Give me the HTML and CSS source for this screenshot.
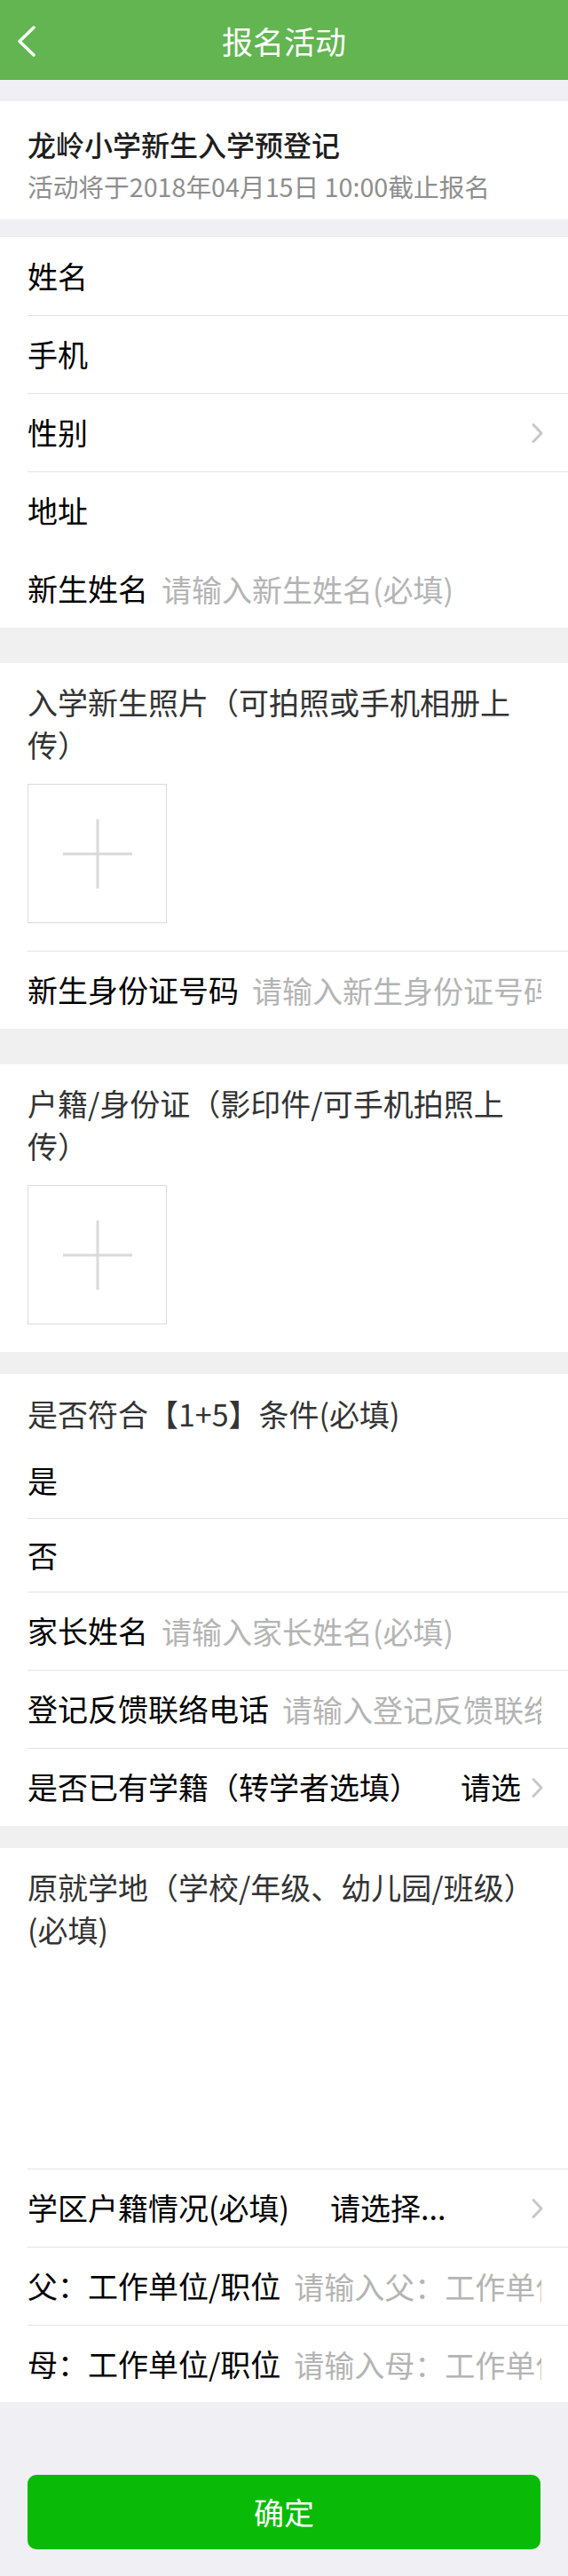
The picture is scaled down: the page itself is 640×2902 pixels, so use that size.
FILE: index.html
```html
<!DOCTYPE html>
<html lang="zh-CN">
<head>
<meta charset="utf-8">
<title>报名活动</title>
<link rel="stylesheet" href="styles.css">
</head>
<body>
<header class="navbar">
  <div class="nav-left">
    <svg class="back-icon" width="24" height="36" viewBox="0 0 24 36"><path d="M19 2 L3 17.5 L19 33" fill="none" stroke="#fff" stroke-width="3.5" stroke-linecap="round" stroke-linejoin="round"/></svg>
  </div>
  <h1 class="nav-title">报名活动</h1>
  <div class="nav-right"></div>
</header>

<section class="card intro">
  <div class="intro-title">龙岭小学新生入学预登记</div>
  <div class="intro-sub">活动将于2018年04月15日 10:00截止报名</div>
</section>

<section class="card basic">
  <div class="row"><span class="label">姓名</span></div>
  <div class="row line"><span class="label">手机</span></div>
  <div class="row line"><span class="label">性别</span>
    <svg class="chevron" width="15" height="24" viewBox="0 0 15 24"><path d="M3 2.5 L12 12 L3 21.5" fill="none" stroke="#c7c7cc" stroke-width="3" stroke-linecap="round" stroke-linejoin="round"/></svg>
  </div>
  <div class="row line"><span class="label">地址</span></div>
  <div class="row"><span class="label">新生姓名</span><input class="field" placeholder="请输入新生姓名(必填)"></div>
</section>

<div class="form">
  <section class="card upload gap-lg">
    <div class="block-title">入学新生照片（可拍照或手机相册上传）</div>
    <div class="upload-box">
      <svg width="80" height="80" viewBox="0 0 80 80"><path d="M40 1 V79 M1 40 H79" stroke="#d9d9d9" stroke-width="3"/></svg>
    </div>
    <div class="row line"><span class="label">新生身份证号码</span><input class="field" placeholder="请输入新生身份证号码(必填)"></div>
  </section>

  <section class="card upload upload-end gap-lg">
    <div class="block-title">户籍/身份证（影印件/可手机拍照上传）</div>
    <div class="upload-box upload-last">
      <svg width="80" height="80" viewBox="0 0 80 80"><path d="M40 1 V79 M1 40 H79" stroke="#d9d9d9" stroke-width="3"/></svg>
    </div>
  </section>

  <section class="card gap-md">
    <div class="block-title question">是否符合【1+5】条件(必填)</div>
    <div class="row opt"><span class="label">是</span></div>
    <div class="row opt line"><span class="label">否</span></div>
    <div class="row line"><span class="label">家长姓名</span><input class="field" placeholder="请输入家长姓名(必填)"></div>
    <div class="row line"><span class="label">登记反馈联络电话</span><input class="field" placeholder="请输入登记反馈联络电话(必填)"></div>
    <div class="row line"><span class="label">是否已有学籍（转学者选填）</span>
      <span class="select-value">请选择...</span>
      <svg class="chevron" width="15" height="24" viewBox="0 0 15 24"><path d="M3 2.5 L12 12 L3 21.5" fill="none" stroke="#c7c7cc" stroke-width="3" stroke-linecap="round" stroke-linejoin="round"/></svg>
    </div>
  </section>

  <section class="card gap-md">
    <div class="block-title">原就学地（学校/年级、幼儿园/班级）(必填)</div>
    <div class="textarea"></div>
    <div class="row line"><span class="label">学区户籍情况(必填)</span>
      <span class="select-value">请选择...</span>
      <svg class="chevron" width="15" height="24" viewBox="0 0 15 24"><path d="M3 2.5 L12 12 L3 21.5" fill="none" stroke="#c7c7cc" stroke-width="3" stroke-linecap="round" stroke-linejoin="round"/></svg>
    </div>
    <div class="row line"><span class="label">父：工作单位/职位</span><input class="field" placeholder="请输入父：工作单位/职位"></div>
    <div class="row line last"><span class="label">母：工作单位/职位</span><input class="field" placeholder="请输入母：工作单位/职位"></div>
  </section>
</div>

<div class="footer">
  <button class="submit" type="button">确定</button>
</div>
</body>
</html>
```

FILE: styles.css
```css
* { box-sizing: border-box; }

html, body {
  margin: 0;
  padding: 0;
}

body {
  background: #efeff4;
  font-family: "Noto Sans CJK SC", "Noto Sans", sans-serif;
  color: #000;
  width: 640px;
}

.navbar {
  height: 90px;
  background: #62b551;
  display: grid;
  grid-template-columns: 1fr auto 1fr;
  align-items: center;
}

.nav-left {
  padding-left: 19px;
  display: flex;
  align-items: center;
  height: 100%;
  padding-top: 3px;
}

.nav-title {
  margin: 0;
  font-size: 35px;
  font-weight: 400;
  color: #fff;
  line-height: 1;
}

.card {
  background: #fff;
}

.intro {
  margin-top: 24px;
  padding: 28px 31px 19px;
}

.intro-title {
  font-size: 32px;
  line-height: 40px;
  font-weight: 500;
  color: #1e1e1e;
}

.intro-sub {
  margin-top: 10px;
  font-size: 28.7px;
  line-height: 36px;
  color: #8e8e8e;
  white-space: nowrap;
}

.basic {
  margin-top: 20px;
}

.form {
  background: #f0f0f0;
}

.gap-lg { border-top: 40px solid #f0f0f0; }
.gap-md { border-top: 25px solid #f0f0f0; }

.row {
  height: 88px;
  margin-left: 31px;
  padding-right: 30px;
  display: flex;
  align-items: center;
  font-size: 34px;
}

.row.line {
  border-top: 1px solid #e3e3e3;
}

.row.opt {
  height: 83px;
}

.row.last {
  height: 87px;
}

.label {
  white-space: nowrap;
  flex: none;
  color: #000;
  line-height: 1.2;
}

.field {
  flex: 1;
  min-width: 0;
  margin-left: 15px;
  border: 0;
  padding: 0;
  outline: none;
  background: transparent;
  font: inherit;
  font-size: 34px;
  color: #000;
}

.field::placeholder {
  color: #b4b4b4;
}

.chevron {
  flex: none;
  margin-left: auto;
  margin-right: -3px;
}

.select-value {
  flex: 1;
  min-width: 0;
  margin-left: 46px;
  margin-right: 12px;
  overflow: hidden;
  white-space: nowrap;
  color: #000;
  line-height: 1.2;
}

.select-value + .chevron {
  margin-left: 0;
}

.block-title {
  padding: 20px 30px 0 31px;
  font-size: 34px;
  line-height: 48px;
  color: #333;
}

.block-title.question {
  padding-top: 21px;
  padding-bottom: 10px;
}

.upload-box {
  margin: 20px 0 31px 31px;
  width: 157px;
  height: 157px;
  border: 1px solid #dadada;
  display: flex;
  align-items: center;
  justify-content: center;
}

.upload-end {
  padding-bottom: 31px;
}

.upload-box.upload-last {
  margin-bottom: 0;
}

.textarea {
  height: 245px;
}

.footer {
  padding: 82px 31px 30px;
}

.submit {
  display: block;
  width: 100%;
  height: 84px;
  border: 0;
  border-radius: 10px;
  background: #09bb07;
  color: #fff;
  font-family: inherit;
  font-size: 34px;
  line-height: 1;
  padding: 0;
}
```
